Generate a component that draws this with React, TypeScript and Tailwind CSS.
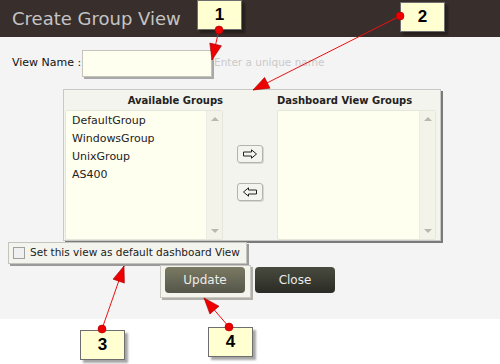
const groups = ["DefaultGroup", "WindowsGroup", "UnixGroup", "AS400"];

type Arrow = { from: [number, number]; to: [number, number] };

const arrows: Arrow[] = [
  { from: [219, 30], to: [212, 60] },
  { from: [400, 16], to: [253, 90] },
  { from: [102, 329], to: [124, 266] },
  { from: [229, 327], to: [204, 298] },
];

const callouts = [
  { n: "1", cls: "left-[197px] top-[0px]" },
  { n: "2", cls: "left-[400px] top-[2px]" },
  { n: "3", cls: "left-[80px] top-[330px]" },
  { n: "4", cls: "left-[208px] top-[327px]" },
];

function head(a: Arrow) {
  const [x1, y1] = a.from;
  const [x2, y2] = a.to;
  const len = Math.hypot(x2 - x1, y2 - y1);
  const ux = (x2 - x1) / len;
  const uy = (y2 - y1) / len;
  const bx = x2 - ux * 16;
  const by = y2 - uy * 16;
  const px = -uy * 6;
  const py = ux * 6;
  return `${x2},${y2} ${bx + px},${by + py} ${bx - px},${by - py}`;
}

const ScrollBar = () => (
  <div className="w-[16px] flex flex-col justify-between items-center py-[6px] bg-[#f3f3ea] border-l border-[#ebebe2]">
    <div className="w-0 h-0 border-l-[4px] border-r-[4px] border-b-[4px] border-l-transparent border-r-transparent border-b-[#b8b8b0]" />
    <div className="w-0 h-0 border-l-[4px] border-r-[4px] border-t-[4px] border-l-transparent border-r-transparent border-t-[#b8b8b0]" />
  </div>
);

const MoveButton = ({ dir }: { dir: "right" | "left" }) => (
  <button className="w-[26px] h-[18px] flex items-center justify-center rounded-[3px] border border-[#b4b4ac] bg-[#f4f4ee] shadow-[1px_1px_0_#d8d8d0]">
    <svg width="16" height="10" viewBox="0 0 16 10">
      {dir === "right" ? (
        <path d="M1.5 3 H9.5 V0.8 L14.5 5 L9.5 9.2 V7 H1.5 Z" fill="none" stroke="#222" strokeWidth="1" />
      ) : (
        <path d="M14.5 3 H6.5 V0.8 L1.5 5 L6.5 9.2 V7 H14.5 Z" fill="none" stroke="#222" strokeWidth="1" />
      )}
    </svg>
  </button>
);

export default function App() {
  return (
    <div className="relative w-[500px] h-[364px] bg-white overflow-hidden font-['DejaVu_Sans',sans-serif]">
      <div className="h-[37px] bg-[#382e2b] pl-[12px] flex items-center">
        <span className="text-[18px] text-[#c4c4c4]">Create Group View</span>
      </div>

      <div className="h-[282px] bg-[#f4f4f4] flex flex-col">
        <div className="mt-[12px] flex items-center h-[28px]">
          <span className="ml-[12px] w-[70px] text-[11px] text-[#111]">View Name :</span>
          <input
            className="w-[130px] h-[27px] bg-[#fffff0] border border-[#c4c4bc] shadow-[2px_2px_0_#a8a8a8] outline-none"
            defaultValue=""
          />
          <span className="ml-[2px] text-[10.5px] text-[#cacaca]">Enter a unique name</span>
        </div>

        <div className="ml-[63px] mt-[12px] w-[378px] h-[152px] bg-[#f4f4ee] border border-[#c8c8c4] shadow-[2px_2px_0_#7a7a7a] flex flex-col pl-[1px]">
          <div className="h-[20px] grid grid-cols-[158px_54px_159px] items-center">
            <span className="text-right text-[10px] font-bold text-[#222]">Available Groups</span>
            <span />
            <span className="text-[10px] font-bold text-[#222]">Dashboard View Groups</span>
          </div>
          <div className="flex-1 grid grid-cols-[158px_54px_159px]">
            <div className="flex bg-[#fffff0] border border-[#e6e6dc] rounded-[2px]">
              <ul className="flex-1 pt-[1px] pl-[6px] text-[11px] text-[#222]">
                {groups.map((g) => (
                  <li key={g} className="h-[18px] leading-[18px]">
                    {g}
                  </li>
                ))}
              </ul>
              <ScrollBar />
            </div>
            <div className="flex flex-col items-center pt-[35px] gap-[20px]">
              <MoveButton dir="right" />
              <MoveButton dir="left" />
            </div>
            <div className="flex bg-[#fffff0] border border-[#e6e6dc] rounded-[2px]">
              <div className="flex-1" />
              <ScrollBar />
            </div>
          </div>
        </div>

        <label className="ml-[8px] mt-[1px] w-[239px] h-[22px] flex items-center bg-[#f4f4ee] border border-[#c4c4bc] shadow-[2px_2px_0_#9a9a9a]">
          <input type="checkbox" className="ml-[4px] w-[12px] h-[12px] appearance-none border border-[#a0a0a0] bg-[#f0f0f0]" />
          <span className="ml-[5px] text-[10.5px] whitespace-nowrap text-[#222]">Set this view as default dashboard View</span>
        </label>

        <div className="mt-[1px] flex items-start">
          <div className="ml-[160px] w-[91px] h-[33px] bg-[#f4f4ec] border border-[#c8c8c0] shadow-[2px_2px_0_#b0b0a8] flex pl-[4px] pt-[1px]">
            <button className="w-[80px] h-[26px] rounded-[4px] bg-gradient-to-b from-[#7a7a62] to-[#55564a] text-[12px] text-[#ececec]">
              Update
            </button>
          </div>
          <button className="ml-[4px] mt-[2px] w-[80px] h-[26px] rounded-[4px] bg-gradient-to-b from-[#4a4b3f] to-[#2a2b24] text-[12px] text-[#ececec]">
            Close
          </button>
        </div>
      </div>

      {callouts.map((c) => (
        <div
          key={c.n}
          className={`absolute ${c.cls} w-[45px] h-[30px] bg-[#ffffd2] border border-[#6e6e6e] shadow-[3px_3px_2px_rgba(0,0,0,0.35)] flex items-center justify-center font-['Liberation_Sans',sans-serif] font-bold text-[17px] text-black`}
        >
          {c.n}
        </div>
      ))}

      <svg className="absolute left-0 top-0 pointer-events-none" width="500" height="364">
        {arrows.map((a, i) => (
          <g key={i}>
            <line x1={a.from[0]} y1={a.from[1]} x2={a.to[0]} y2={a.to[1]} stroke="#ee1111" strokeWidth="1" />
            <polygon points={head(a)} fill="#ee0000" stroke="#990000" strokeWidth="0.6" />
            <circle cx={a.from[0]} cy={a.from[1]} r="4" fill="#ee0000" stroke="#aa0000" strokeWidth="0.6" />
          </g>
        ))}
      </svg>
    </div>
  );
}
